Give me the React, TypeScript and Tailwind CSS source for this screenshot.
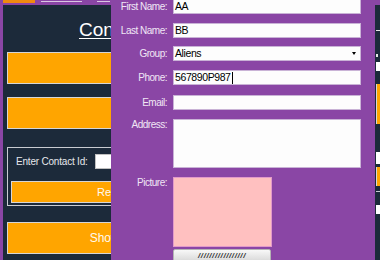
import React from "react";

const fields = [
  { label: "First Name:", value: "AA", mt: "mt-[-1px]" },
  { label: "Last Name:", value: "BB", mt: "mt-[9px]" },
];

function Field({ label, children, className = "" }: { label: string; children: React.ReactNode; className?: string }) {
  return (
    <div className={`flex items-center ${className}`}>
      <span className="w-[56px] shrink-0 text-right text-[10px] leading-[12px] tracking-[-0.5px] text-[#f1e6f5]">
        {label}
      </span>
      <div className="ml-[6px] w-[188px]">{children}</div>
    </div>
  );
}

function TextBox({ value, caret }: { value?: string; caret?: boolean }) {
  return (
    <div className="flex h-[15px] items-center border border-[#c9b3d6] bg-[#fdfdfd] pl-[1px] text-[10.5px] leading-[13px] tracking-[-0.4px] text-black">
      {value}
      {caret && <span className="ml-[1px] h-[12px] w-px bg-black" />}
    </div>
  );
}

function OrangeButton({ text, className = "", textClass = "text-[12px]" }: { text: string; className?: string; textClass?: string }) {
  return (
    <div
      className={`flex items-center justify-center border border-[#d6d6d6] bg-[#ffa500] text-[#fffaf0] ${textClass} ${className}`}
    >
      {text}
    </div>
  );
}

export default function App() {
  return (
    <div className="relative h-[260px] w-[380px] overflow-hidden bg-[#8a46a5] font-['Liberation_Sans',Arial,sans-serif]">
      {/* strip of the tab bar above the main panel */}
      <div className="flex h-[5px] items-start">
        <div className="ml-[3px] h-[3px] w-[32px] bg-[#f08a10]" />
        <div className="ml-[6px] mt-[1px] h-px w-[41px] bg-[#d9c6e2]" />
        <div className="ml-[15px] mt-[1px] h-px w-[13px] bg-[#d9c6e2]" />
      </div>

      <div className="ml-[3px] flex h-[255px] bg-[#1c2a3a]">
        {/* main menu, mostly covered by the dialog */}
        <div className="w-[108px] shrink-0 overflow-hidden">
          <div className="ml-[4px] flex w-[262px] flex-col">
            <div className="mt-[14px] pl-[72px] text-[19px] leading-[22px] text-white underline underline-offset-[2px]">
              Contacts
            </div>
            <OrangeButton text="Add New" className="mt-[11px] h-[32px]" />
            <OrangeButton text="Update" className="mt-[13px] h-[32px]" />

            <div className="mt-[18px] flex h-[59px] flex-col border border-[#c9ccd2] px-[3px]">
              <div className="mt-[6px] flex items-center">
                <span className="ml-[5px] text-[10px] leading-[12px] tracking-[-0.2px] text-[#e6e8ec]">
                  Enter Contact Id:
                </span>
                <div className="ml-[7px] h-[15px] w-[60px] border border-[#c0c0c0] bg-white" />
              </div>
              <OrangeButton text="Remove Contact" textClass="text-[11px]" className="mt-[12px] h-[22px]" />
            </div>

            <OrangeButton text="Show All Contacts" className="mt-[16px] h-[32px]" />
          </div>
        </div>

        <div className="ml-auto flex w-[4px] flex-col">
          <div className="mt-[25px] h-px bg-[#e8e8e8]" />
          <div className="mt-[23px] h-[3px] w-[2px] bg-[#e8e8e8]" />
          <div className="mt-[5px] h-[9px] bg-white" />
          <div className="mt-[13px] h-[40px] border-l border-[#d6d6d6] bg-[#ffa500]" />
          <div className="mt-[28px] h-[12px] bg-white" />
          <div className="mt-[3px] h-[19px] border-l border-[#d6d6d6] bg-[#ffa500]" />
          <div className="mt-[5px] h-px bg-[#c9ccd2]" />
          <div className="mt-[13px] h-[9px] bg-white" />
        </div>
      </div>

      {/* edit contact dialog */}
      <div className="absolute left-[111px] top-0 flex h-[260px] w-[264px] flex-col bg-[#8a46a5]">
        {fields.map((f) => (
          <Field key={f.label} label={f.label} className={f.mt}>
            <TextBox value={f.value} />
          </Field>
        ))}
        <Field label="Group:" className="mt-[8px]">
          <div className="flex h-[15px] items-center justify-between border border-[#c9b3d6] bg-[#fdfdfd] pl-[1px] pr-[4px] text-[10.5px] leading-[13px] tracking-[-0.4px] text-black">
            Aliens
            <span className="h-0 w-0 border-x-[2.5px] border-t-[3px] border-x-transparent border-t-black" />
          </div>
        </Field>
        <Field label="Phone:" className="mt-[9px]">
          <TextBox value="567890P987" caret />
        </Field>
        <Field label="Email:" className="mt-[10px]">
          <TextBox />
        </Field>
        <Field label="Address:" className="mt-[9px] !items-start">
          <div className="h-[49px] border border-[#c9b3d6] bg-[#fdfdfd]" />
        </Field>
        <Field label="Picture:" className="mt-[9px] !items-start">
          <div className="h-[70px] w-[99px] border border-[#e29ac9] bg-[#ffc0c0]" />
        </Field>
        <div className="ml-[62px] mt-[2px] flex h-[16px] w-[98px] items-start justify-center rounded-t-[2px] border border-[#b4b4b4] bg-gradient-to-b from-[#f8f8f8] to-[#dcdcdc] pt-[1px]">
          <span className="text-[8px] font-bold italic leading-[9px] tracking-[0.6px] text-[#333]">
            /////////////////
          </span>
        </div>
      </div>
    </div>
  );
}
